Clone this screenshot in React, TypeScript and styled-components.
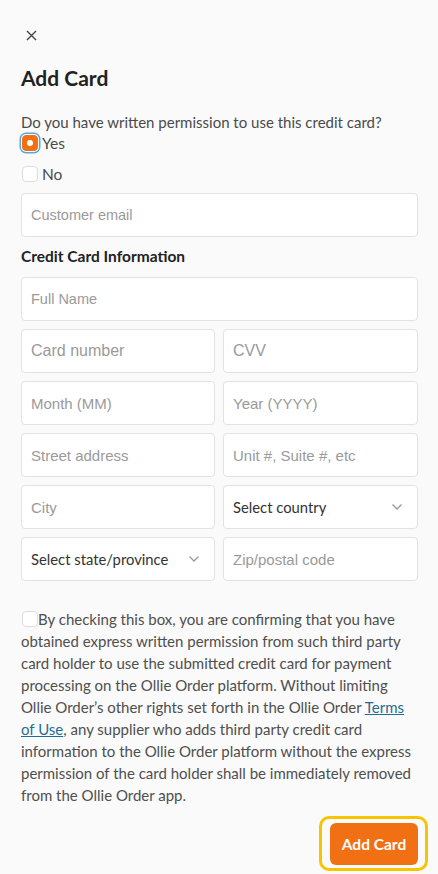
import React from "react";
import styled, { createGlobalStyle } from "styled-components";

const Global = createGlobalStyle`
  html, body { margin: 0; padding: 0; background: #fafafa; }
  body { font-family: Lato, "Noto Sans", sans-serif; color: #333; }
  * { box-sizing: border-box; }
`;

const Page = styled.div`
  width: 438px;
  min-height: 874px;
  padding: 26px 20px 0 21px;
  display: flex;
  flex-direction: column;
`;

const CloseBtn = styled.button`
  width: 18px;
  height: 18px;
  margin-left: 1px;
  padding: 0;
  border: none;
  background: none;
  display: flex;
  align-items: center;
  justify-content: center;
  color: #444;
`;

const Title = styled.h1`
  margin: 20px 0 0;
  font-size: 21px;
  font-weight: 700;
  line-height: 28px;
  color: #222;
`;

const Question = styled.p`
  margin: 19px 0 0;
  font-size: 15px;
  line-height: 22px;
  color: #4a4a4a;
`;

const OptionRow = styled.label<{ $top: number }>`
  display: flex;
  align-items: center;
  gap: 4px;
  margin-top: ${(p) => p.$top}px;
  height: 20px;
  font-size: 15.5px;
  color: #4a4a4a;
`;

const Box = styled.span<{ $checked?: boolean; $focus?: boolean }>`
  position: relative;
  width: 16px;
  height: 16px;
  margin-left: 1px;
  border-radius: 4px;
  flex-shrink: 0;
  background: ${(p) => (p.$checked ? "#f07013" : "#fff")};
  border: 1px solid ${(p) => (p.$checked ? "#f07013" : "#ddd")};
  box-shadow: ${(p) => (p.$focus ? "0 0 0 1px #fff, 0 0 0 2.5px #5aa6dc" : "none")};
  &::after {
    content: "";
    display: ${(p) => (p.$checked ? "block" : "none")};
    position: absolute;
    left: 50%;
    top: 50%;
    width: 6px;
    height: 6px;
    margin: -3px 0 0 -3px;
    border-radius: 50%;
    background: #fff;
  }
`;

const Field = styled.div`
  height: 44px;
  border: 1px solid #e2e2e2;
  border-radius: 4px;
  background: #fff;
  display: flex;
  align-items: center;
  justify-content: space-between;
  padding: 0 14px 0 9px;
`;

const Placeholder = styled.span<{ $size?: number }>`
  font-family: "Liberation Sans", Arial, sans-serif;
  font-size: ${(p) => p.$size ?? 15}px;
  color: #9a9a9a;
`;

const SelectText = styled.span`
  font-size: 14.8px;
  color: #333;
`;

const EmailField = styled(Field)`
  margin-top: 9px;
`;

const Section = styled.h2`
  margin: 8px 0 0;
  font-size: 15.5px;
  font-weight: 700;
  line-height: 22px;
  color: #222;
`;

const Grid = styled.div`
  margin-top: 10px;
  display: grid;
  grid-template-columns: 194px 1fr;
  column-gap: 8px;
  row-gap: 8px;
`;

const Full = styled(Field)`
  grid-column: 1 / -1;
`;

const Consent = styled.p`
  margin: 27px 0 0;
  font-size: 15px;
  line-height: 22px;
  color: #4f4f4f;
`;

const InlineBox = styled.span`
  display: inline-block;
  width: 16px;
  height: 16px;
  margin-left: 1px;
  vertical-align: -2px;
  border: 1px solid #ddd;
  border-radius: 4px;
  background: #fff;
`;

const TermsLink = styled.a`
  color: #1f6d92;
  text-decoration: underline;
`;

const Footer = styled.div`
  margin-top: 10px;
  display: flex;
  justify-content: flex-end;
`;

const FocusRing = styled.div`
  margin-right: -10px;
  padding: 4px 7px 3px 8px;
  border: 3px solid #f8c400;
  border-radius: 10px;
`;

const AddButton = styled.button`
  height: 42px;
  width: 88px;
  border: none;
  border-radius: 6px;
  background: #f07013;
  color: #fff;
  font-family: Lato, sans-serif;
  font-size: 15.5px;
  font-weight: 700;
  display: block;
`;

const Chevron = () => (
  <svg width="12" height="8" viewBox="0 0 12 8" fill="none">
    <path d="M1.5 1.5 L6 6 L10.5 1.5" stroke="#999" strokeWidth="1.3" />
  </svg>
);

export default function App() {
  return (
    <>
      <Global />
      <Page>
        <CloseBtn aria-label="close">
          <svg width="11" height="11" viewBox="0 0 11 11">
            <path d="M1 1 L10 10 M10 1 L1 10" stroke="#444" strokeWidth="1.4" />
          </svg>
        </CloseBtn>
        <Title>Add Card</Title>
        <Question>Do you have written permission to use this credit card?</Question>
        <OptionRow $top={0}>
          <Box $checked $focus />
          Yes
        </OptionRow>
        <OptionRow $top={11}>
          <Box />
          No
        </OptionRow>
        <EmailField>
          <Placeholder $size={14.5}>Customer email</Placeholder>
        </EmailField>
        <Section>Credit Card Information</Section>
        <Grid>
          <Full>
            <Placeholder $size={14.5}>Full Name</Placeholder>
          </Full>
          <Field>
            <Placeholder $size={16}>Card number</Placeholder>
          </Field>
          <Field>
            <Placeholder $size={16}>CVV</Placeholder>
          </Field>
          <Field>
            <Placeholder>Month (MM)</Placeholder>
          </Field>
          <Field>
            <Placeholder>Year (YYYY)</Placeholder>
          </Field>
          <Field>
            <Placeholder>Street address</Placeholder>
          </Field>
          <Field>
            <Placeholder>Unit #, Suite #, etc</Placeholder>
          </Field>
          <Field>
            <Placeholder>City</Placeholder>
          </Field>
          <Field>
            <SelectText>Select country</SelectText>
            <Chevron />
          </Field>
          <Field>
            <SelectText>Select state/province</SelectText>
            <Chevron />
          </Field>
          <Field>
            <Placeholder>Zip/postal code</Placeholder>
          </Field>
        </Grid>
        <Consent>
          <InlineBox />
          By checking this box, you are confirming that you have obtained express written
          permission from such third party card holder to use the submitted credit card for
          payment processing on the Ollie Order platform. Without limiting Ollie Order’s other
          rights set forth in the Ollie Order <TermsLink href="#">Terms of Use</TermsLink>, any
          supplier who adds third party credit card information to the Ollie Order platform
          without the express permission of the card holder shall be immediately removed from
          the Ollie Order app.
        </Consent>
        <Footer>
          <FocusRing>
            <AddButton>Add Card</AddButton>
          </FocusRing>
        </Footer>
      </Page>
    </>
  );
}
